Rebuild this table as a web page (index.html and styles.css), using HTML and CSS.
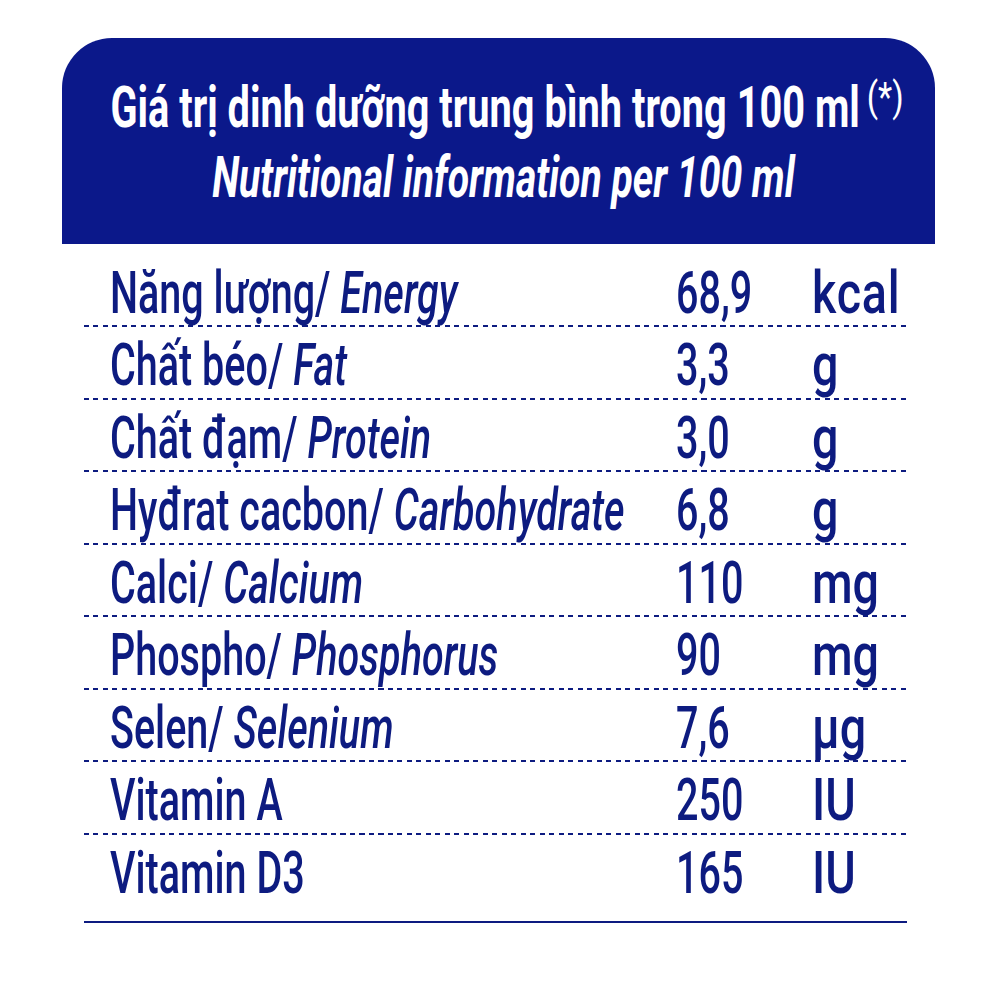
FILE: index.html
```html
<!DOCTYPE html>
<html lang="vi">
<head>
<meta charset="utf-8">
<title>Nutrition</title>
<link rel="stylesheet" href="styles.css">
</head>
<body>
<div class="card">
  <header class="head">
    <div class="t1"><span class="cx">Giá trị dinh dưỡng trung bình trong 100 ml<sup class="star">(*)</sup></span></div>
    <div class="t2"><span class="cx">Nutritional information per 100 ml</span></div>
  </header>
  <div class="table">
    <div class="row first"><div class="name"><span class="cl">Năng lượng/ <i>Energy</i></span></div><div class="val"><span class="cl">68,9</span></div><div class="unit"><span class="cu kcal">kcal</span></div></div>
    <div class="row"><div class="name"><span class="cl">Chất béo/ <i>Fat</i></span></div><div class="val"><span class="cl">3,3</span></div><div class="unit"><span class="cu">g</span></div></div>
    <div class="row"><div class="name"><span class="cl">Chất đạm/ <i>Protein</i></span></div><div class="val"><span class="cl">3,0</span></div><div class="unit"><span class="cu">g</span></div></div>
    <div class="row"><div class="name"><span class="cl">Hyđrat cacbon/ <i>Carbohydrate</i></span></div><div class="val"><span class="cl">6,8</span></div><div class="unit"><span class="cu">g</span></div></div>
    <div class="row"><div class="name"><span class="cl">Calci/ <i>Calcium</i></span></div><div class="val"><span class="cl">110</span></div><div class="unit"><span class="cu">mg</span></div></div>
    <div class="row"><div class="name"><span class="cl">Phospho/ <i>Phosphorus</i></span></div><div class="val"><span class="cl">90</span></div><div class="unit"><span class="cu">mg</span></div></div>
    <div class="row"><div class="name"><span class="cl">Selen/ <i>Selenium</i></span></div><div class="val"><span class="cl">7,6</span></div><div class="unit"><span class="cu">µg</span></div></div>
    <div class="row"><div class="name"><span class="cl">Vitamin A</span></div><div class="val"><span class="cl">250</span></div><div class="unit"><span class="cu">IU</span></div></div>
    <div class="row last"><div class="name"><span class="cl">Vitamin D3</span></div><div class="val"><span class="cl">165</span></div><div class="unit"><span class="cu">IU</span></div></div>
  </div>
</div>
</body>
</html>
```
FILE: styles.css
```css
html, body {
  margin: 0;
  padding: 0;
  background: #ffffff;
}
body {
  font-family: Roboto, "Liberation Sans", sans-serif;
  color: #0d1b80;
}
.card {
  width: 1000px;
  height: 1000px;
  padding-top: 38px;
  box-sizing: border-box;
}
.head {
  margin-left: 62px;
  width: 873px;
  height: 206px;
  box-sizing: border-box;
  background: #0b188a;
  border-radius: 50px 50px 0 0;
  color: #ffffff;
  font-weight: 700;
  font-size: 58px;
  padding: 34px 0 0 10px;
}
.t1, .t2 {
  display: flex;
  justify-content: center;
  height: 70px;
  line-height: 70px;
  white-space: nowrap;
}
.t1 { padding-left: 8px; }
.t2 { font-style: italic; }
.cx {
  display: inline-block;
  transform: scaleX(0.675);
  transform-origin: center;
}
.t1 .cx { transform: scaleX(0.685); }
.star {
  display: inline-block;
  font-size: 40px;
  font-weight: 400;
  vertical-align: top;
  line-height: 40px;
  margin-left: 10px;
  margin-right: 10px;
  position: relative;
  top: 6px;
  transform: scaleX(1.2);
  transform-origin: left center;
}
.table {
  margin-left: 84px;
  width: 823px;
}
.row {
  display: grid;
  grid-template-columns: 566px 136px 1fr;
  padding-left: 26px;
  height: 72.5px;
  box-sizing: border-box;
  padding-top: 5px;
  line-height: 66px;
  font-size: 59px;
  font-weight: 500;
  white-space: nowrap;
  background: repeating-linear-gradient(90deg, #0d1b80 0 5px, transparent 5px 9.5px) left bottom / 100% 2px no-repeat;
}
.row.first {
  height: 83px;
  padding-top: 16px;
}
.row.last {
  height: 88.5px;
  background: #0d1b80 linear-gradient(#ffffff, #ffffff) left top / 100% calc(100% - 2px) no-repeat;
}
.cl {
  display: inline-block;
  transform: scaleX(0.67);
  transform-origin: left center;
}
.cu {
  display: inline-block;
  transform: scaleX(0.79);
  transform-origin: left center;
}
.kcal { letter-spacing: 1px; }
```
